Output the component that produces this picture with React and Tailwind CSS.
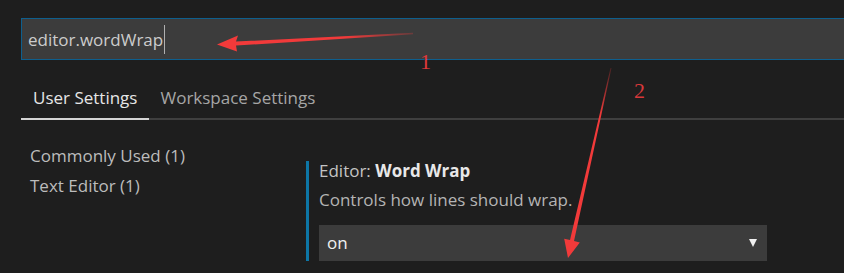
import React from 'react';

function Annotations() {
    return (
        <svg className="absolute inset-0 pointer-events-none" width="844" height="273" viewBox="0 0 844 273">
            <defs>
                <linearGradient id="fade1" x1="413" y1="33" x2="217" y2="45" gradientUnits="userSpaceOnUse">
                    <stop offset="0" stopColor="#f23a3a" stopOpacity="0.25" />
                    <stop offset="0.35" stopColor="#f23a3a" stopOpacity="1" />
                    <stop offset="1" stopColor="#f23a3a" />
                </linearGradient>
                <linearGradient id="fade2" x1="611" y1="68" x2="568" y2="258" gradientUnits="userSpaceOnUse">
                    <stop offset="0" stopColor="#f23a3a" stopOpacity="0.2" />
                    <stop offset="0.25" stopColor="#f23a3a" stopOpacity="1" />
                    <stop offset="1" stopColor="#f23a3a" />
                </linearGradient>
            </defs>
            {/* arrow 1: towards the search box text */}
            <polygon
                points="413,32.8 236,41.6 238,35.5 217,44.5 237,51.5 236,45.6 413,34.2"
                fill="url(#fade1)"
            />
            {/* arrow 2: towards the dropdown */}
            <polygon
                points="611.5,68.1 574,241 579.8,242.4 568,258 564.2,238.7 570,240 610.5,67.9"
                fill="url(#fade2)"
            />
            <text x="420" y="69" fontFamily="'Liberation Serif', serif" fontSize="22" fill="#e0383a">1</text>
            <text x="634" y="98" fontFamily="'Liberation Serif', serif" fontSize="22" fill="#d8383a">2</text>
        </svg>
    );
}

export default function App() {
    return (
        <div className="relative w-[844px] h-[273px] overflow-hidden bg-[#1e1e1e] pt-[18px] pl-[21px] font-['Open_Sans',sans-serif]">
            {/* Search box */}
            <div className="h-[42px] bg-[#3c3c3c] border-y border-l border-[#0e5f8e] flex items-center pl-[6px]">
                <span className="text-[17px] text-[#cccccc] leading-none">editor.wordWrap</span>
                <span className="ml-[1px] w-px h-[29px] bg-[#b0b0b0]" />
            </div>

            {/* Tabs */}
            <div className="mt-[18px] flex border-b-2 border-[#3f3f3f]">
                <div className="h-[40px] px-[12px] flex items-center text-[17px] text-[#e6e6e6] border-b-2 border-[#d4d4d4] -mb-[2px] box-content">
                    User Settings
                </div>
                <div className="h-[40px] px-[11px] flex items-center text-[17px] text-[#a6a6a6]">
                    Workspace Settings
                </div>
            </div>

            {/* Body */}
            <div className="flex">
                <div className="w-[285px] pl-[9px] pt-[21px] text-[17px] leading-[30px] text-[#bcbcbc]">
                    <div>Commonly Used (1)</div>
                    <div>Text Editor (1)</div>
                </div>

                <div className="mt-[41px] border-l-[3px] border-[#0d76a6] pl-[10px]">
                    <div className="text-[17px] leading-[20px] text-[#c4c4c4]">
                        Editor: <span className="font-bold text-[#e8e8e8]">Word Wrap</span>
                    </div>
                    <div className="mt-[9px] text-[17px] leading-[20px] text-[#b4b4b4]">
                        Controls how lines should wrap.
                    </div>
                    <div className="mt-[15px] w-[448px] h-[36px] bg-[#3c3c3c] flex items-center justify-between pl-[8px] pr-[10px]">
                        <span className="text-[17px] text-[#f0f0f0]">on</span>
                        <svg width="8" height="8" viewBox="0 0 8 8">
                            <polygon points="0,0 8,0 4,8" fill="#f0f0f0" />
                        </svg>
                    </div>
                </div>
            </div>

            <Annotations />
        </div>
    );
}
